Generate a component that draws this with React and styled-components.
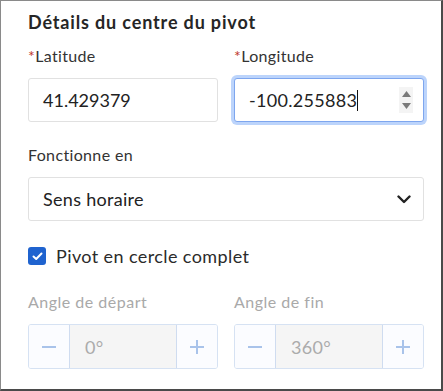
import React, { useState } from 'react';
import styled, { createGlobalStyle } from 'styled-components';

const GlobalStyle = createGlobalStyle`
    html, body {
        margin: 0;
        padding: 0;
        background: #ffffff;
        overflow: hidden;
    }
    * {
        box-sizing: border-box;
    }
`

const Panel = styled.div`
    width: 443px;
    height: 391px;
    border-top: 1px solid #8a8a8a;
    border-left: 1px solid #8a8a8a;
    border-right: 2px solid #4a4a4a;
    border-bottom: 2px solid #4a4a4a;
    padding: 9px 17px 0 27px;
    font-family: Lato, "Open Sans", sans-serif;
    color: #2b2b2b;
    display: flex;
    flex-direction: column;
`

const Title = styled.h3`
    margin: 0;
    font-size: 18px;
    font-weight: 700;
    letter-spacing: 0.85px;
    color: #262626;
    line-height: 24px;
`

const Row = styled.div`
    display: grid;
    grid-template-columns: 1fr 1fr;
    column-gap: 16px;
    margin-top: ${(props) => props.top || 0}px;
`

const Field = styled.div`
    display: flex;
    flex-direction: column;
    margin-top: ${(props) => props.top || 0}px;
`

const Label = styled.label`
    font-size: 16px;
    letter-spacing: ${(props) => (props.disabled ? '0.5px' : '0.35px')};
    line-height: 20px;
    color: ${(props) => (props.disabled ? '#a9a9a9' : '#333333')};
    margin-bottom: 12px;
`

const Required = styled.span`
    color: #c0392b;
`

const InputBox = styled.div`
    height: 44px;
    border: 1px solid ${(props) => (props.focused ? '#7ea6ee' : '#e1e1e1')};
    border-radius: 3px;
    box-shadow: ${(props) => (props.focused ? '0 0 0 3px #bcd4fb' : 'none')};
    display: flex;
    align-items: center;
    padding: 0 10px 0 14px;
    background: #fff;
`

const Value = styled.span`
    flex: 1;
    font-size: 18px;
    letter-spacing: ${(props) => (props.numeric ? '0' : '0.3px')};
    color: #222;
`

const Caret = styled.span`
    display: inline-block;
    width: 1px;
    height: 21px;
    background: #111;
    vertical-align: -4px;
`

const Spinner = styled.div`
    width: 14px;
    height: 26px;
    background: #f4f4f4;
    display: flex;
    flex-direction: column;
    align-items: center;
    justify-content: space-between;
    padding: 4px 0;
`

const Select = styled.div`
    height: 44px;
    border: 1px solid #e1e1e1;
    border-radius: 3px;
    display: flex;
    align-items: center;
    justify-content: space-between;
    padding: 0 12px 0 14px;
`

const CheckRow = styled.div`
    display: flex;
    align-items: center;
    gap: 10px;
    margin-top: 24px;
    font-size: 18px;
    letter-spacing: 0.4px;
    color: #2b2b2b;
`

const Checkbox = styled.span`
    width: 18px;
    height: 18px;
    border-radius: 3px;
    background: #1f63cf;
    display: flex;
    align-items: center;
    justify-content: center;
`

const Stepper = styled.div`
    height: 45px;
    border: 1px solid #d6e2f3;
    border-radius: 3px;
    display: grid;
    grid-template-columns: 41px 1fr 41px;
    overflow: hidden;
`

const StepButton = styled.div`
    display: flex;
    align-items: center;
    justify-content: center;
    background: #fbfcff;
    border-left: ${(props) => (props.side === 'right' ? '1px solid #cfdcf0' : 'none')};
    border-right: ${(props) => (props.side === 'left' ? '1px solid #cfdcf0' : 'none')};
`

const StepValue = styled.div`
    background: #f5f5f5;
    display: flex;
    align-items: center;
    padding-left: 15px;
    font-size: 18px;
    letter-spacing: 0.3px;
    color: #ababab;
`

function Minus() {
    return (
        <svg width="14" height="14" viewBox="0 0 14 14">
            <rect x="0" y="6" width="14" height="2" fill="#a9c3ea" />
        </svg>
    );
}

function Plus() {
    return (
        <svg width="14" height="14" viewBox="0 0 14 14">
            <rect x="0" y="6" width="14" height="2" fill="#a9c3ea" />
            <rect x="6" y="0" width="2" height="14" fill="#a9c3ea" />
        </svg>
    );
}

function AngleStepper({ label, value }) {
    return (
        <Field>
            <Label disabled>{label}</Label>
            <Stepper>
                <StepButton side='left'><Minus /></StepButton>
                <StepValue>{value}</StepValue>
                <StepButton side='right'><Plus /></StepButton>
            </Stepper>
        </Field>
    );
}

export default function App() {
    const [fullCircle] = useState(true);

    return (
        <Panel>
            <GlobalStyle />
            <Title>Détails du centre du pivot</Title>
            <Row top={12}>
                <Field>
                    <Label><Required>*</Required>Latitude</Label>
                    <InputBox>
                        <Value numeric>41.429379</Value>
                    </InputBox>
                </Field>
                <Field>
                    <Label><Required>*</Required>Longitude</Label>
                    <InputBox focused>
                        <Value>-100.255883<Caret /></Value>
                        <Spinner>
                            <svg width="9" height="6" viewBox="0 0 9 6"><path d="M4.5 0 L9 6 L0 6 Z" fill="#7b7b7b" /></svg>
                            <svg width="9" height="6" viewBox="0 0 9 6"><path d="M0 0 L9 0 L4.5 6 Z" fill="#7b7b7b" /></svg>
                        </Spinner>
                    </InputBox>
                </Field>
            </Row>
            <Field top={23}>
                <Label>Fonctionne en</Label>
                <Select>
                    <Value>Sens horaire</Value>
                    <svg width="14" height="9" viewBox="0 0 14 9">
                        <path d="M1.5 1.5 L7 7 L12.5 1.5" fill="none" stroke="#222" strokeWidth="2.4" strokeLinecap="round" strokeLinejoin="round" />
                    </svg>
                </Select>
            </Field>
            <CheckRow>
                <Checkbox>
                    {fullCircle && (
                        <svg width="11" height="9" viewBox="0 0 11 9">
                            <path d="M1.5 4.5 L4.2 7 L9.5 1.5" fill="none" stroke="#fff" strokeWidth="2" strokeLinecap="round" strokeLinejoin="round" />
                        </svg>
                    )}
                </Checkbox>
                Pivot en cercle complet
            </CheckRow>
            <Row top={25}>
                <AngleStepper label='Angle de départ' value='0°' />
                <AngleStepper label='Angle de fin' value='360°' />
            </Row>
        </Panel>
    );
}
